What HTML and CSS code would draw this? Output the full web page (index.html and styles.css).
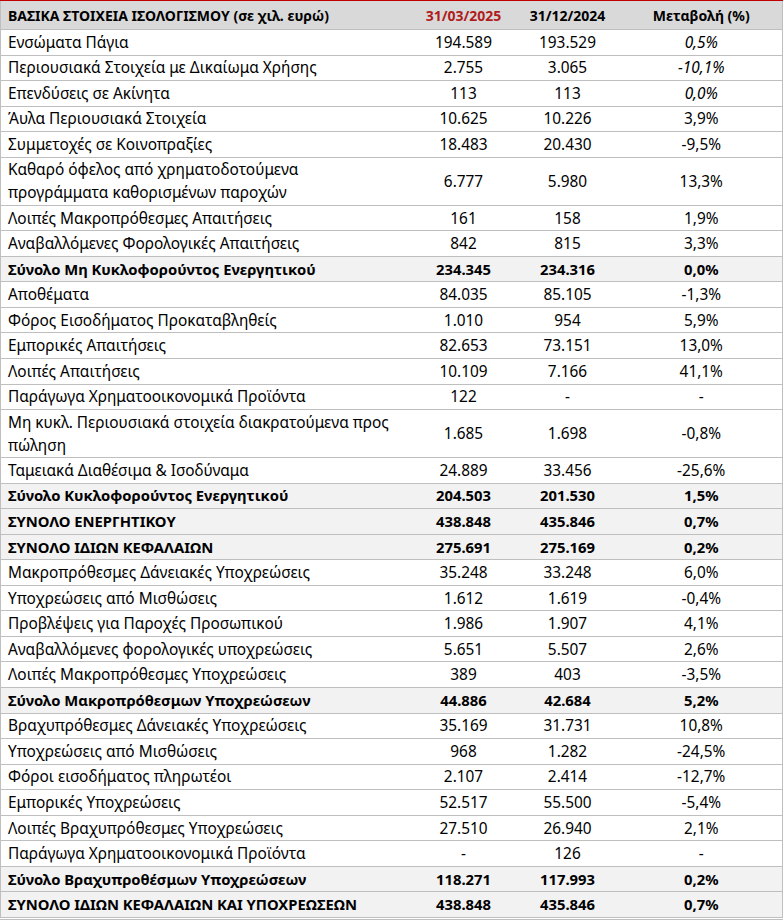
FILE: index.html
```html
<!DOCTYPE html>
<html lang="el">
<head>
<meta charset="utf-8">
<link rel="stylesheet" href="styles.css">
</head>
<body>
<table class="bs">
<colgroup><col class="c1"><col class="c2"><col class="c3"><col class="c4"></colgroup>
<thead>
<tr class="head"><th class="lbl">ΒΑΣΙΚΑ ΣΤΟΙΧΕΙΑ ΙΣΟΛΟΓΙΣΜΟΥ (σε χιλ. ευρώ)</th><th class="red">31/03/2025</th><th>31/12/2024</th><th>Μεταβολή (%)</th></tr>
</thead>
<tbody>
<tr><td>Ενσώματα Πάγια</td><td>194.589</td><td>193.529</td><td class="it">0,5%</td></tr>
<tr><td>Περιουσιακά Στοιχεία με Δικαίωμα Χρήσης</td><td>2.755</td><td>3.065</td><td class="it">-10,1%</td></tr>
<tr><td>Επενδύσεις σε Ακίνητα</td><td>113</td><td>113</td><td class="it">0,0%</td></tr>
<tr><td>Άυλα Περιουσιακά Στοιχεία</td><td>10.625</td><td>10.226</td><td>3,9%</td></tr>
<tr><td>Συμμετοχές σε Κοινοπραξίες</td><td>18.483</td><td>20.430</td><td>-9,5%</td></tr>
<tr class="tall"><td>Καθαρό όφελος από χρηματοδοτούμενα<br>προγράμματα καθορισμένων παροχών</td><td>6.777</td><td>5.980</td><td>13,3%</td></tr>
<tr><td>Λοιπές Μακροπρόθεσμες Απαιτήσεις</td><td>161</td><td>158</td><td>1,9%</td></tr>
<tr><td>Αναβαλλόμενες Φορολογικές Απαιτήσεις</td><td>842</td><td>815</td><td>3,3%</td></tr>
<tr class="tot"><td>Σύνολο Μη Κυκλοφορούντος Ενεργητικού</td><td>234.345</td><td>234.316</td><td>0,0%</td></tr>
<tr><td>Αποθέματα</td><td>84.035</td><td>85.105</td><td>-1,3%</td></tr>
<tr><td>Φόρος Εισοδήματος Προκαταβληθείς</td><td>1.010</td><td>954</td><td>5,9%</td></tr>
<tr><td>Εμπορικές Απαιτήσεις</td><td>82.653</td><td>73.151</td><td>13,0%</td></tr>
<tr><td>Λοιπές Απαιτήσεις</td><td>10.109</td><td>7.166</td><td>41,1%</td></tr>
<tr><td>Παράγωγα Χρηματοοικονομικά Προϊόντα</td><td>122</td><td>-</td><td>-</td></tr>
<tr class="tall"><td>Μη κυκλ. Περιουσιακά στοιχεία διακρατούμενα προς<br>πώληση</td><td>1.685</td><td>1.698</td><td>-0,8%</td></tr>
<tr><td>Ταμειακά Διαθέσιμα &amp; Ισοδύναμα</td><td>24.889</td><td>33.456</td><td>-25,6%</td></tr>
<tr class="tot"><td>Σύνολο Κυκλοφορούντος Ενεργητικού</td><td>204.503</td><td>201.530</td><td>1,5%</td></tr>
<tr class="tot"><td>ΣΥΝΟΛΟ ΕΝΕΡΓΗΤΙΚΟΥ</td><td>438.848</td><td>435.846</td><td>0,7%</td></tr>
<tr class="tot"><td>ΣΥΝΟΛΟ ΙΔΙΩΝ ΚΕΦΑΛΑΙΩΝ</td><td>275.691</td><td>275.169</td><td>0,2%</td></tr>
<tr><td>Μακροπρόθεσμες Δάνειακές Υποχρεώσεις</td><td>35.248</td><td>33.248</td><td>6,0%</td></tr>
<tr><td>Υποχρεώσεις από Μισθώσεις</td><td>1.612</td><td>1.619</td><td>-0,4%</td></tr>
<tr><td>Προβλέψεις για Παροχές Προσωπικού</td><td>1.986</td><td>1.907</td><td>4,1%</td></tr>
<tr><td>Αναβαλλόμενες φορολογικές υποχρεώσεις</td><td>5.651</td><td>5.507</td><td>2,6%</td></tr>
<tr><td>Λοιπές Μακροπρόθεσμες Υποχρεώσεις</td><td>389</td><td>403</td><td>-3,5%</td></tr>
<tr class="tot"><td>Σύνολο Μακροπρόθεσμων Υποχρεώσεων</td><td>44.886</td><td>42.684</td><td>5,2%</td></tr>
<tr><td>Βραχυπρόθεσμες Δάνειακές Υποχρεώσεις</td><td>35.169</td><td>31.731</td><td>10,8%</td></tr>
<tr><td>Υποχρεώσεις από Μισθώσεις</td><td>968</td><td>1.282</td><td>-24,5%</td></tr>
<tr><td>Φόροι εισοδήματος πληρωτέοι</td><td>2.107</td><td>2.414</td><td>-12,7%</td></tr>
<tr><td>Εμπορικές Υποχρεώσεις</td><td>52.517</td><td>55.500</td><td>-5,4%</td></tr>
<tr><td>Λοιπές Βραχυπρόθεσμες Υποχρεώσεις</td><td>27.510</td><td>26.940</td><td>2,1%</td></tr>
<tr><td>Παράγωγα Χρηματοοικονομικά Προϊόντα</td><td>-</td><td>126</td><td>-</td></tr>
<tr class="tot"><td>Σύνολο Βραχυπροθέσμων Υποχρεώσεων</td><td>118.271</td><td>117.993</td><td>0,2%</td></tr>
<tr class="tot last"><td>ΣΥΝΟΛΟ ΙΔΙΩΝ ΚΕΦΑΛΑΙΩΝ ΚΑΙ ΥΠΟΧΡΕΩΣΕΩΝ</td><td>438.848</td><td>435.846</td><td>0,7%</td></tr>
</tbody>
</table>
</body>
</html>
```
FILE: styles.css
```css
html, body {
  margin: 0;
  padding: 0;
  background: #ffffff;
}
body {
  font-family: "Noto Sans", "Open Sans", sans-serif;
  font-size: 15.4px;
  color: #000;
}
.bs {
  width: 782px;
  border-collapse: collapse;
  table-layout: fixed;
  border-left: 1px solid #bfbfbf;
  border-right: 1px solid #bfbfbf;
}
.c1 { width: 412px; }
.c2 { width: 102px; }
.c3 { width: 106px; }
.c4 { width: 162px; }
.bs th, .bs td {
  padding: 0;
  text-align: center;
  vertical-align: middle;
  border-bottom: 1px solid #bfbfbf;
  line-height: 23px;
  white-space: nowrap;
}
.bs th.lbl, .bs td:first-child {
  text-align: left;
  padding-left: 7px;
}
.head th {
  background: #d9d9d9;
  font-weight: bold;
  font-size: 14px;
  height: 28px;
  border-top: 1px solid #c00000;
}
.head .red { color: #b01c1c; }
.bs td { height: 24.56px; }
.tall td { height: 47px; }
.tall td:first-child { line-height: 23px; }
.tot td {
  background: #f2f2f2;
  font-weight: bold;
  font-size: 14.8px;
}
.it { font-style: italic; }
.last td { border-bottom: 3px double #bfbfbf; }
```
